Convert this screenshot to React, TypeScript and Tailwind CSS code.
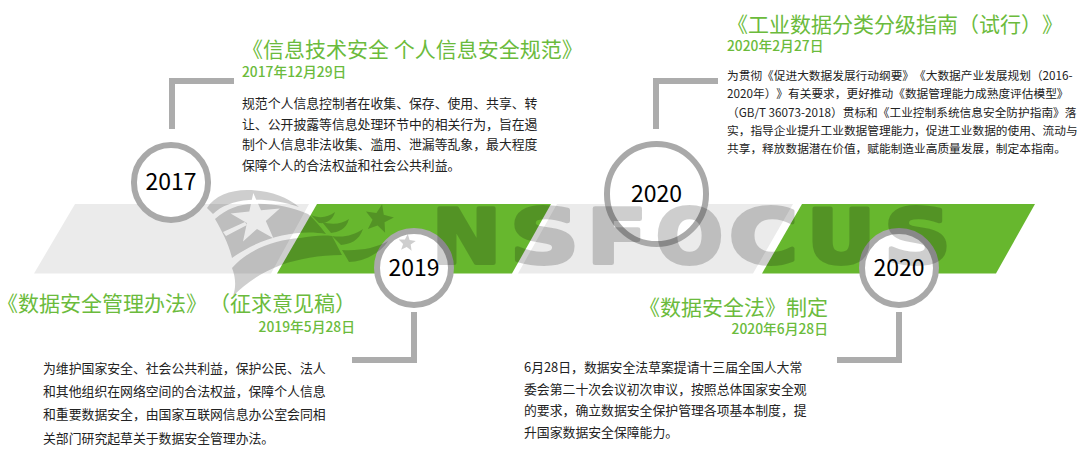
import React from "react";

const FONT = "font-['Noto_Sans_CJK_SC','Noto_Sans',sans-serif]";

function starPath(cx: number, cy: number, R: number, rot = 0, r = R * 0.42) {
  let d = "";
  for (let i = 0; i < 10; i++) {
    const a = ((-90 + rot + i * 36) * Math.PI) / 180;
    const rad = i % 2 === 0 ? R : r;
    d += `${i === 0 ? "M" : "L"}${(cx + rad * Math.cos(a)).toFixed(1)} ${(cy + rad * Math.sin(a)).toFixed(1)}`;
  }
  return d + "Z";
}

function Bands() {
  return (
    <svg className="block w-[1080px] h-[70px] shrink-0" viewBox="0 204 1080 70">
      <polygon points="75,204 309,204 271,273.5 34,273.5" fill="#ebebeb" />
      <polygon points="557,204 793,204 753,273.5 518,273.5" fill="#ebebeb" />
      <polygon points="317,204 551,204 512,273.5 277,273.5" fill="#67b72e" />
      <polygon points="802,204 1035,204 996,273.5 762,273.5" fill="#67b72e" />
    </svg>
  );
}

function Watermark() {
  const letters: [string, number, number][] = [
    ["N", 432, 69],
    ["S", 510, 69],
    ["F", 587, 60],
    ["O", 656, 67],
    ["C", 729, 69],
    ["U", 807, 68],
    ["S", 884, 67],
  ];
  return (
    <svg className="absolute left-0 top-0 w-[1080px] h-[465px] pointer-events-none" viewBox="0 0 1080 465">
      <defs>
        <mask id="cut" maskUnits="userSpaceOnUse" x="0" y="0" width="1080" height="465">
          <rect width="1080" height="465" fill="white" />
          <path d={starPath(256, 219, 26, -6, 10)} fill="black" />
        </mask>
      </defs>
      <g opacity="0.19" fill="#000">
        <g mask="url(#cut)">
          <path d="M207 208C214 196 230 190 247 190C268 190 286 196 299 207C282 201 264 199 249 200C234 201 221 206 213 214Z" />
          <path d="M215 219C226 209 240 204 252 204C272 203 292 207 308 214C314 219 320 226 326 234C300 229 262 236 232 258C229 245 222 231 215 219ZM223 232L245 222L247 225L226 236Z" fillRule="evenodd" />
        </g>
        <path d="M232 268C250 248 275 240 300 238C312 236 322 235 332 236L342 255C320 255 298 259 281 265C262 272 246 283 233 296C236 288 236 278 232 268Z" />
        <path d="M311 215C320 219 328 217 335 212C333 220 326 224 319 223Z" />
        <path d="M322 222C332 225 342 224 349 219C346 230 338 232 331 233Z" />
        <path d="M332 236C344 238 354 235 363 229C359 241 350 244 341 245Z" />
        <path d="M342 250C360 251 376 248 388 241C380 254 362 262 349 262Z" />
        <path d={starPath(379, 219, 15, 12, 6.5)} />
        <path d={starPath(407, 243, 9, 5, 4)} />
        <g stroke="#000" strokeWidth="4" strokeLinejoin="round">
          {letters.map(([c, x, w], i) => (
            <text
              key={i}
              x={x}
              y={263}
              textLength={w}
              lengthAdjust="spacingAndGlyphs"
              fontSize={74}
              fontWeight={700}
              fontFamily="'DejaVu Sans', sans-serif"
            >
              {c}
            </text>
          ))}
        </g>
      </g>
    </svg>
  );
}

const ring = "absolute rounded-full border-[6px] border-[#a9a9a9] bg-white flex items-center justify-center pb-[4px] text-[23px] text-black";
const title = "text-[21px] leading-[30px] text-[#6bbb3c]";
const bracket = "absolute w-[65px] h-[51px] border-[#acacac]";

export default function App() {
  return (
    <div className={`relative flex flex-col w-[1080px] h-[465px] bg-white overflow-hidden whitespace-nowrap [text-spacing-trim:space-all] ${FONT}`}>
      {/* upper captions */}
      <div className="flex h-[204px] shrink-0 pl-[242px]">
        <div className="w-[485px] pt-[33px]">
          <div className={title}>《信息技术安全 个人信息安全规范》</div>
          <div className="text-[13.8px] leading-[16px] font-medium text-[#6bbb3c]">2017年12月29日</div>
          <div className="mt-[14px] text-[12.85px] leading-[20.5px] text-[#222]">
            <div>规范个人信息控制者在收集、保存、使用、共享、转</div>
            <div>让、公开披露等信息处理环节中的相关行为，旨在遏</div>
            <div>制个人信息非法收集、滥用、泄漏等乱象，最大程度</div>
            <div>保障个人的合法权益和社会公共利益。</div>
          </div>
        </div>
        <div className="pt-[8px]">
          <div className={title}>《工业数据分类分级指南（试行）》</div>
          <div className="text-[13.8px] leading-[14px] font-medium text-[#6bbb3c]">2020年2月27日</div>
          <div className="mt-[14px] text-[11.7px] leading-[18.25px] text-[#222]">
            <div>为贯彻《促进大数据发展行动纲要》《大数据产业发展规划（2016-</div>
            <div>2020年）》有关要求，更好推动《数据管理能力成熟度评估模型》</div>
            <div>（GB/T 36073-2018）贯标和《工业控制系统信息安全防护指南》落</div>
            <div>实，指导企业提升工业数据管理能力，促进工业数据的使用、流动与</div>
            <div>共享，释放数据潜在价值，赋能制造业高质量发展，制定本指南。</div>
          </div>
        </div>
      </div>

      <Bands />

      {/* lower captions */}
      <div className="flex">
        <div className="w-[527px] -ml-[3px] pt-[13px]">
          <div className="w-[358px]">
            <div className={title}>《数据安全管理办法》<span className="ml-[2px]">（征求意见稿）</span></div>
            <div className="text-right text-[13.8px] leading-[18px] font-medium text-[#6bbb3c]">2019年5月28日</div>
          </div>
          <div className="mt-[21px] pl-[46px] text-[12.85px] leading-[23.2px] text-[#222]">
            <div>为维护国家安全、社会公共利益，保护公民、法人</div>
            <div>和其他组织在网络空间的合法权益，保障个人信息</div>
            <div>和重要数据安全，由国家互联网信息办公室会同相</div>
            <div>关部门研究起草关于数据安全管理办法。</div>
          </div>
        </div>
        <div className="w-[304px] pt-[17px]">
          <div className="text-right">
            <div className={title}>《数据安全法》制定</div>
            <div className="text-[13.8px] leading-[14px] font-medium text-[#6bbb3c]">2020年6月28日</div>
          </div>
          <div className="mt-[21px] text-[12.85px] leading-[21.7px] text-[#222]">
            <div>6月28日，数据安全法草案提请十三届全国人大常</div>
            <div>委会第二十次会议初次审议，按照总体国家安全观</div>
            <div>的要求，确立数据安全保护管理各项基本制度，提</div>
            <div>升国家数据安全保障能力。</div>
          </div>
        </div>
      </div>

      {/* timeline nodes lying over the bands */}
      <div className={`${bracket} left-[169px] top-[78px] border-l-[6px] border-t-[6px]`} />
      <div className={`${bracket} left-[653px] top-[78px] border-l-[6px] border-t-[6px]`} />
      <div className={`${bracket} left-[352px] top-[312px] border-r-[6px] border-b-[6px]`} />
      <div className={`${bracket} left-[837px] top-[312px] border-r-[6px] border-b-[6px]`} />
      <div className={`${ring} left-[131px] top-[142px] w-[80px] h-[81px]`}>2017</div>
      <div className={`${ring} left-[374px] top-[228px] w-[80px] h-[80px]`}>2019</div>
      <div className={`${ring} left-[604px] top-[141px] w-[105px] h-[106px]`}>2020</div>
      <div className={`${ring} left-[859px] top-[228px] w-[80px] h-[80px]`}>2020</div>

      <Watermark />
    </div>
  );
}
